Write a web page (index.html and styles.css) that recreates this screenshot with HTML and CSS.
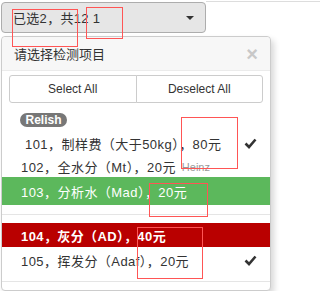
FILE: index.html
```html
<!DOCTYPE html>
<html lang="zh">
<head>
    <meta charset="UTF-8" />
    <title>检测项目</title>
    <link rel="stylesheet" href="styles.css">
</head>
<body>

    <!-- 选择按钮 -->
    <div class="topbar">
        <button class="select-btn">
            <span>已选2，共12 1</span>
            <span class="caret"></span>
        </button>
        <div class="topline"></div>
    </div>

    <!-- 下拉面板 -->
    <div class="panel">
        <div class="panel-title">
            <span>请选择检测项目</span>
            <span class="close">×</span>
        </div>
        <div class="actions">
            <button>Select All</button>
            <button>Deselect All</button>
        </div>
        <ul class="menu">
            <li class="group"><span class="badge">Relish</span></li>
            <li class="item first">101，制样费（大于50kg），80元
                <svg class="check" width="13" height="11" viewBox="0 0 13 11"><path d="M1.5 5.5l3.5 3.5 6.5-7.5" stroke="#333" stroke-width="2.6" fill="none"/></svg>
            </li>
            <li class="item second">102，全水分（Mt），20元<small>Heinz</small></li>
            <li class="item green">103，分析水（Mad），20元</li>
            <li class="divider"></li>
            <li class="item red">104，灰分（AD），40元</li>
            <li class="item last">105，挥发分（Adaf），20元
                <svg class="check" width="13" height="11" viewBox="0 0 13 11"><path d="M1.5 5.5l3.5 3.5 6.5-7.5" stroke="#333" stroke-width="2.6" fill="none"/></svg>
            </li>
            <li class="divider"></li>
        </ul>
    </div>

    <!-- 标注框 -->
    <div class="mark m1"></div>
    <div class="mark m2"></div>
    <div class="mark m3"></div>
    <div class="mark m4"></div>
    <div class="mark m5"></div>

</body>
</html>
```

FILE: styles.css
```css
body {
  margin: 0;
  font-family: "Liberation Sans", "Noto Sans CJK SC", sans-serif;
  font-size: 13px;
  color: #333;
  background: #fff;
  overflow: hidden;
}

.topbar {
  display: flex;
  padding-top: 2px;
  padding-left: 1px;
}
.select-btn {
  width: 205px;
  height: 31px;
  display: flex;
  align-items: center;
  justify-content: space-between;
  padding: 0 11px 0 11px;
  background: #e6e6e6;
  border: 1px solid #adadad;
  border-radius: 4px;
  font-family: inherit;
  font-size: 13px;
  letter-spacing: 0.3px;
  color: #333;
}
.caret {
  width: 0;
  height: 0;
  border-top: 4px solid #333;
  border-left: 4px solid transparent;
  border-right: 4px solid transparent;
}
.topline {
  flex: 1;
  height: 0;
  margin-top: -1px;
  border-top: 1px solid #ddd;
}

/* 面板 */
.panel {
  width: 268px;
  margin: 3px 0 0 1px;
  border: 1px solid #ccc;
  border-radius: 4px;
  box-shadow: 3px 4px 6px rgba(0,0,0,0.16);
  background: #fff;
}
.panel-title {
  height: 33px;
  display: flex;
  align-items: center;
  justify-content: space-between;
  padding: 0 12px 0 12px;
  background: #f7f7f7;
  border-bottom: 1px solid #ebebeb;
  border-radius: 4px 4px 0 0;
  font-size: 13px;
  color: #333;
}
.close {
  font-size: 20px;
  font-weight: bold;
  color: #c8c8c8;
  margin-top: 1px;
}

.actions {
  display: flex;
  padding: 4px 7px 4px 7px;
}
.actions button {
  flex: 1;
  height: 28px;
  background: #fff;
  border: 1px solid #ccc;
  font-family: inherit;
  font-size: 12px;
  color: #333;
}
.actions button:first-child {
  border-radius: 3px 0 0 3px;
}
.actions button:last-child {
  border-radius: 0 3px 3px 0;
  margin-left: -1px;
}

.menu {
  list-style: none;
  margin: 0;
  padding: 5px 0 0 0;
}
.group {
  padding-left: 18px;
  height: 15px;
}
.badge {
  display: inline-block;
  width: 47px;
  height: 14px;
  line-height: 14px;
  text-align: center;
  background: #777;
  color: #fff;
  border-radius: 7px;
  font-size: 12px;
  font-weight: bold;
}
.item {
  display: flex;
  align-items: center;
  padding-left: 19px;
  padding-right: 13px;
  letter-spacing: 0.45px;
}
.item .check {
  margin-left: auto;
}
.item small {
  font-size: 11px;
  letter-spacing: 0;
  color: #999;
  margin-left: 6px;
  margin-top: 2px;
}
.first {
  height: 20px;
  margin-top: 6px;
  padding-left: 23px;
}
.second {
  height: 20px;
  margin-top: 3px;
  margin-bottom: 1px;
}
.green {
  height: 28px;
  background: #5cb85c;
  color: #fff;
}
.red {
  height: 24px;
  background: #b90000;
  color: #fff;
  font-weight: bold;
  letter-spacing: 0.4px;
}
.last {
  height: 26px;
}
.divider {
  height: 1px;
  margin: 9px 0 8px 0;
  background: #e5e5e5;
}
.divider:last-child {
  margin-top: 8px;
}

/* 红色标注 */
.mark {
  position: absolute;
  border: 1px solid #f55;
}
.m1 { left: 12px; top: 9px; width: 64px; height: 36px; }
.m2 { left: 86px; top: 7px; width: 35px; height: 30px; }
.m3 { left: 181px; top: 117px; width: 55px; height: 50px; }
.m4 { left: 149px; top: 183px; width: 57px; height: 32px; }
.m5 { left: 137px; top: 227px; width: 64px; height: 50px; }
```
